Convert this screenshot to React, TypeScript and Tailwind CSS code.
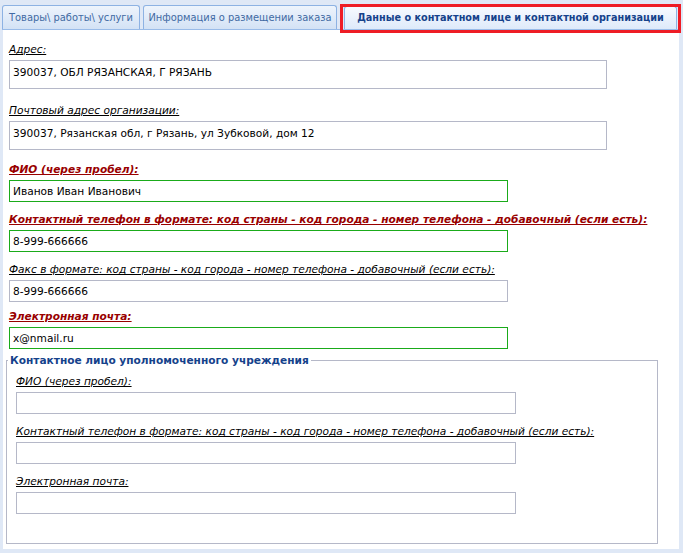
import React from 'react';

type Kind = 'plain' | 'required';

interface FieldProps {
  label: string;
  value?: string;
  kind?: Kind;
  inputClass: string;
  topClass: string;
}

const Field: React.FC<FieldProps> = ({ label, value = '', kind = 'plain', inputClass, topClass }) => {
  const required = kind === 'required';
  return (
    <div className={topClass}>
      <div
        className={`h-[15px] text-[10.6px] leading-[15px] italic underline whitespace-nowrap ${
          required ? 'font-bold text-[#990000]' : 'text-black'
        }`}
      >
        {label}
      </div>
      <div
        className={`mt-[3px] bg-white border text-[10.6px] text-black whitespace-nowrap pl-[3px] ${
          required ? 'border-[#1aab1a]' : 'border-[#b5b8c8]'
        } ${inputClass}`}
      >
        {value}
      </div>
    </div>
  );
};

const phoneLabel =
  'Контактный телефон в формате: код страны - код города - номер телефона - добавочный (если есть):';

export default function App() {
  return (
    <div
      className="w-[683px] h-[553px] bg-[#dfe8f6] flex flex-col relative overflow-hidden"
      style={{ fontFamily: '"DejaVu Sans", Verdana, sans-serif' }}
    >
      {/* tab strip */}
      <div className="h-[30px] flex items-end ml-[2px] mr-[4px] border-b border-[#99bbe8]">
        <div className="w-[138px] h-[24px] flex items-center justify-center overflow-hidden border border-b-0 border-[#8db2e3] rounded-t-[3px] bg-linear-to-b from-[#eef4fc] to-[#d3e2f5] text-[9.9px] text-[#416aa3] whitespace-nowrap pt-[1px]">
          Товары\ работы\ услуги
        </div>
        <div className="ml-[3px] w-[194px] h-[24px] flex items-center justify-center overflow-hidden border border-b-0 border-[#8db2e3] rounded-t-[3px] bg-linear-to-b from-[#eef4fc] to-[#d3e2f5] text-[9.9px] text-[#416aa3] whitespace-nowrap pt-[1px]">
          Информация о размещении заказа
        </div>
        <div className="ml-[7px] w-[333px] h-[23px] flex items-center justify-center overflow-hidden border border-b-0 border-[#8db2e3] rounded-t-[3px] bg-linear-to-b from-[#f7faff] to-[#deeafa] text-[9.7px] font-bold text-[#15428b] whitespace-nowrap pt-[1px]">
          Данные о контактном лице и контактной организации
        </div>
      </div>

      {/* red highlight over the active tab */}
      <div className="absolute left-[340px] top-[4px] w-[341px] h-[29px] border-[3px] border-[#ee1c25]" />

      {/* panel body */}
      <div className="ml-[3px] mr-[4px] h-[519px] bg-white pl-[6px] pt-[12px]">
        <Field label="Адрес:" value="390037, ОБЛ РЯЗАНСКАЯ, Г РЯЗАНЬ" inputClass="w-[598px] h-[29px] pt-[4px]" topClass="" />
        <Field
          label="Почтовый адрес организации:"
          value="390037, Рязанская обл, г Рязань, ул Зубковой, дом 12"
          inputClass="w-[598px] h-[29px] pt-[4px]"
          topClass="mt-[14px]"
        />
        <Field
          label="ФИО (через пробел):"
          value="Иванов Иван Иванович"
          kind="required"
          inputClass="w-[499px] h-[22px] leading-[20px]"
          topClass="mt-[12px]"
        />
        <Field
          label={phoneLabel}
          value="8-999-666666"
          kind="required"
          inputClass="w-[499px] h-[22px] leading-[20px]"
          topClass="mt-[10px]"
        />
        <Field
          label="Факс в формате: код страны - код города - номер телефона - добавочный (если есть):"
          value="8-999-666666"
          inputClass="w-[499px] h-[22px] leading-[20px]"
          topClass="mt-[10px]"
        />
        <Field
          label="Электронная почта:"
          value="x@nmail.ru"
          kind="required"
          inputClass="w-[499px] h-[22px] leading-[20px]"
          topClass="mt-[7px]"
        />

        <fieldset className="mt-[4px] ml-[-3px] w-[652px] h-[191px] border border-[#b5b8c8] pl-[9px] pr-0">
          <legend className="px-[2px] ml-[-8px] text-[10.6px] leading-[14px] font-bold text-[#15428b] whitespace-nowrap">
            Контактное лицо уполномоченного учреждения
          </legend>
          <Field label="ФИО (через пробел):" inputClass="w-[500px] h-[22px]" topClass="mt-[7px]" />
          <Field label={phoneLabel} inputClass="w-[500px] h-[22px]" topClass="mt-[10px]" />
          <Field label="Электронная почта:" inputClass="w-[500px] h-[22px]" topClass="mt-[10px]" />
        </fieldset>
      </div>
    </div>
  );
}
